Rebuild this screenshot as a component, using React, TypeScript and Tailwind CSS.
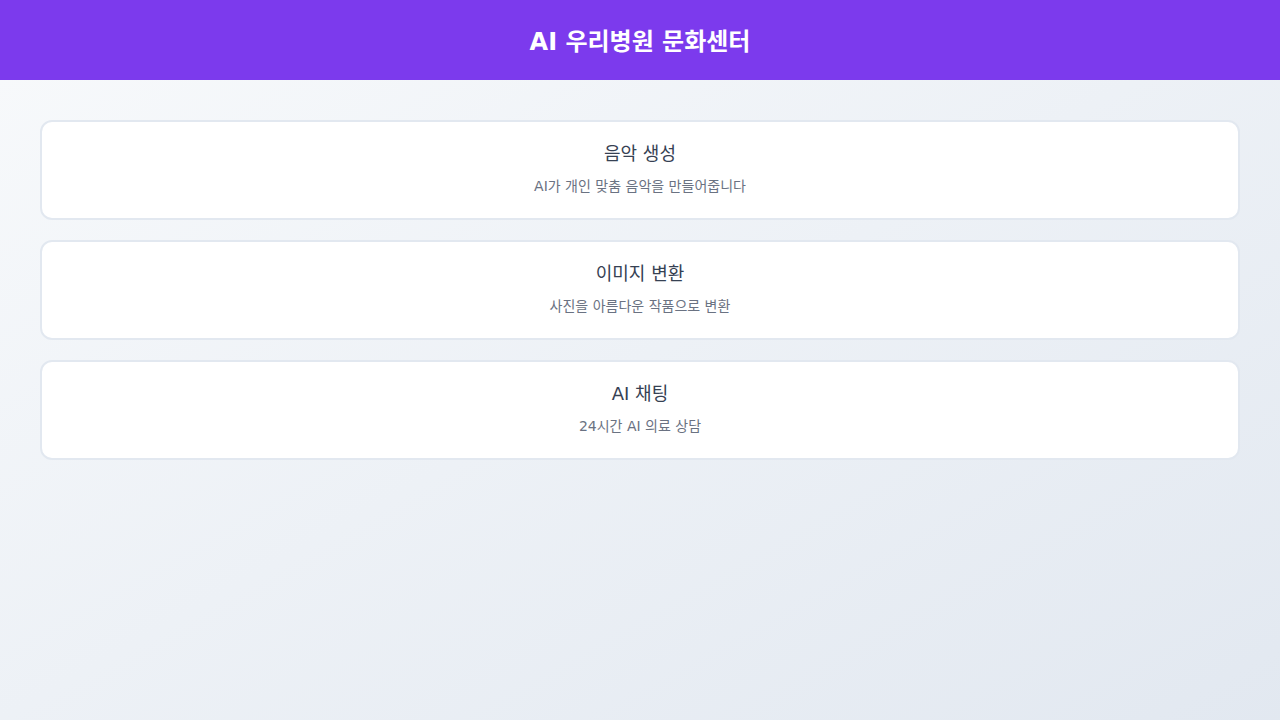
const FONT = "font-['DejaVu_Sans','Noto_Sans_CJK_KR',sans-serif]";

type Feature = {
  id: string;
  title: string;
  description: string;
};

const FEATURES: Feature[] = [
  {
    id: "music",
    title: "음악 생성",
    description: "AI가 개인 맞춤 음악을 만들어줍니다",
  },
  {
    id: "image",
    title: "이미지 변환",
    description: "사진을 아름다운 작품으로 변환",
  },
  {
    id: "chat",
    title: "AI 채팅",
    description: "24시간 AI 의료 상담",
  },
];

export default function App() {
  return (
    <div className={`flex min-h-screen flex-col bg-gradient-to-br from-slate-50 to-slate-200 ${FONT}`}>
      <header className="flex h-20 items-center justify-center bg-[#7c3aed] pt-1">
        <h1 className="text-2xl font-bold text-white">AI 우리병원 문화센터</h1>
      </header>

      <main className="flex flex-col gap-5 p-10">
        {FEATURES.map((item) => (
          <div
            key={item.id}
            className="flex flex-col items-center rounded-xl border-2 border-slate-200 bg-white px-5 pt-[18px] pb-[22px] text-center"
          >
            <h2 className="mb-2 text-lg text-gray-700">{item.title}</h2>
            <p className="text-sm text-gray-500">{item.description}</p>
          </div>
        ))}
      </main>
    </div>
  );
}
